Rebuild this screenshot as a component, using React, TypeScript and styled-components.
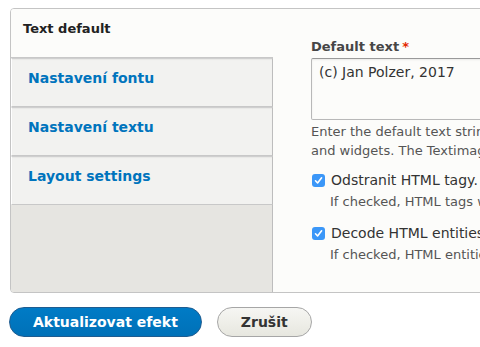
import styled, { createGlobalStyle } from "styled-components";

const GlobalStyle = createGlobalStyle`
  html, body {
    margin: 0;
    padding: 0;
    background: #ffffff;
    overflow: hidden;
  }
  body {
    font-family: "DejaVu Sans", "Noto Sans", sans-serif;
    font-size: 13px;
    color: #333;
  }
`;

const Page = styled.div`
  padding: 8px 0 0 9px;
  width: 620px;
`;

const VerticalTabs = styled.div`
  display: flex;
  margin-left: 1px;
  border: 1px solid #c4c4c4;
  border-radius: 4px;
  overflow: hidden;
  background: #fcfcfa;
`;

const TabList = styled.ul`
  list-style: none;
  margin: 0;
  padding: 0;
  width: 262px;
  flex-shrink: 0;
  display: flex;
  flex-direction: column;
`;

const Tab = styled.li<{ $selected?: boolean }>`
  box-sizing: border-box;
  height: 49px;
  padding: ${p => (p.$selected ? "11px 12px" : "10px 16px")};
  line-height: 18px;
  font-size: ${p => (p.$selected ? "13px" : "14px")};
  font-weight: bold;
  background: ${p => (p.$selected ? "#fcfcfa" : "#f2f2f0")};
  color: ${p => (p.$selected ? "#222" : "#0074bd")};
  border-top: ${p => (p.$selected ? "none" : "1px solid #cfcfcf")};
  border-bottom: 1px solid #c8c8c8;
  border-right: ${p => (p.$selected ? "none" : "1px solid #bdbdbd")};
  border-left: ${p => (p.$selected ? "none" : "1px solid #ffffff")};
  box-shadow: ${p => (p.$selected ? "none" : "inset 0 1px 1px rgba(0,0,0,0.04)")};
`;

const TabFiller = styled.li`
  flex: 1;
  background: #e6e5e1;
  border-right: 1px solid #bdbdbd;
`;

const Pane = styled.div`
  flex: 1;
  padding: 29px 0 28px 38px;
`;

const FieldLabel = styled.label`
  display: block;
  font-weight: bold;
  color: #464646;
  line-height: 18px;
  margin-bottom: 2px;
`;

const Required = styled.span`
  color: #e32700;
  margin-left: 3px;
`;

const TextArea = styled.div`
  box-sizing: border-box;
  width: 320px;
  height: 62px;
  padding: 4px 7px;
  font-size: 14px;
  line-height: 18px;
  border: 1px solid #b8b8b8;
  border-top-color: #999;
  border-radius: 2px;
  background: #fcfcfa;
  box-shadow: inset 0 1px 2px rgba(0, 0, 0, 0.08);
  color: #333;
`;

const Description = styled.div<{ $indent?: boolean }>`
  color: #555;
  line-height: 19px;
  white-space: nowrap;
  margin-left: ${p => (p.$indent ? "19px" : "0")};
`;

const HelpText = styled.div`
  margin-top: 2px;
`;

const CheckItem = styled.div<{ $first?: boolean }>`
  margin-top: ${p => (p.$first ? "10px" : "12px")};

  ${Description} {
    margin-top: 2px;
  }
`;

const CheckRow = styled.div`
  display: flex;
  align-items: center;
  gap: 6px;
  font-size: 14px;
  line-height: 20px;
  white-space: nowrap;
  color: #333;
`;

const CheckBox = styled.span`
  width: 13px;
  height: 13px;
  border-radius: 3px;
  background: #3b97f8;
  display: flex;
  align-items: center;
  justify-content: center;
  margin-left: 1px;
`;

const Actions = styled.div`
  display: flex;
  gap: 15px;
  margin-top: 14px;
`;

const Button = styled.button<{ $primary?: boolean }>`
  box-sizing: border-box;
  height: 30px;
  border-radius: 15px;
  padding: 0 23px;
  font-family: inherit;
  font-size: 14px;
  font-weight: bold;
  cursor: pointer;
  color: ${p => (p.$primary ? "#fff" : "#333")};
  border: 1px solid ${p => (p.$primary ? "#1e5c90" : "#a6a6a6")};
  background: ${p =>
    p.$primary
      ? "linear-gradient(to bottom, #007bc6, #0071b8)"
      : "linear-gradient(to bottom, #f6f6f3, #e7e7df)"};
`;

function Check() {
  return (
    <CheckBox>
      <svg width="9" height="9" viewBox="0 0 9 9">
        <path d="M1.5 4.8 L3.6 7 L7.6 1.8" fill="none" stroke="#fff" strokeWidth="1.6" strokeLinecap="round" strokeLinejoin="round" />
      </svg>
    </CheckBox>
  );
}

export default function App() {
  return (
    <Page>
      <GlobalStyle />
      <VerticalTabs>
        <TabList>
          <Tab $selected>Text default</Tab>
          <Tab>Nastavení fontu</Tab>
          <Tab>Nastavení textu</Tab>
          <Tab>Layout settings</Tab>
          <TabFiller />
        </TabList>
        <Pane>
          <FieldLabel>
            Default text<Required>*</Required>
          </FieldLabel>
          <TextArea>(c) Jan Polzer, 2017</TextArea>
          <HelpText>
            <Description>Enter the default text string for this effect. You can use tokens</Description>
            <Description>and widgets. The Textimage module will replace them.</Description>
          </HelpText>
          <CheckItem $first>
            <CheckRow>
              <Check />
              Odstranit HTML tagy.
            </CheckRow>
            <Description $indent>If checked, HTML tags will be stripped from the text.</Description>
          </CheckItem>
          <CheckItem>
            <CheckRow>
              <Check />
              Decode HTML entities.
            </CheckRow>
            <Description $indent>If checked, HTML entities will be decoded.</Description>
          </CheckItem>
        </Pane>
      </VerticalTabs>
      <Actions>
        <Button $primary>Aktualizovat efekt</Button>
        <Button>Zrušit</Button>
      </Actions>
    </Page>
  );
}
